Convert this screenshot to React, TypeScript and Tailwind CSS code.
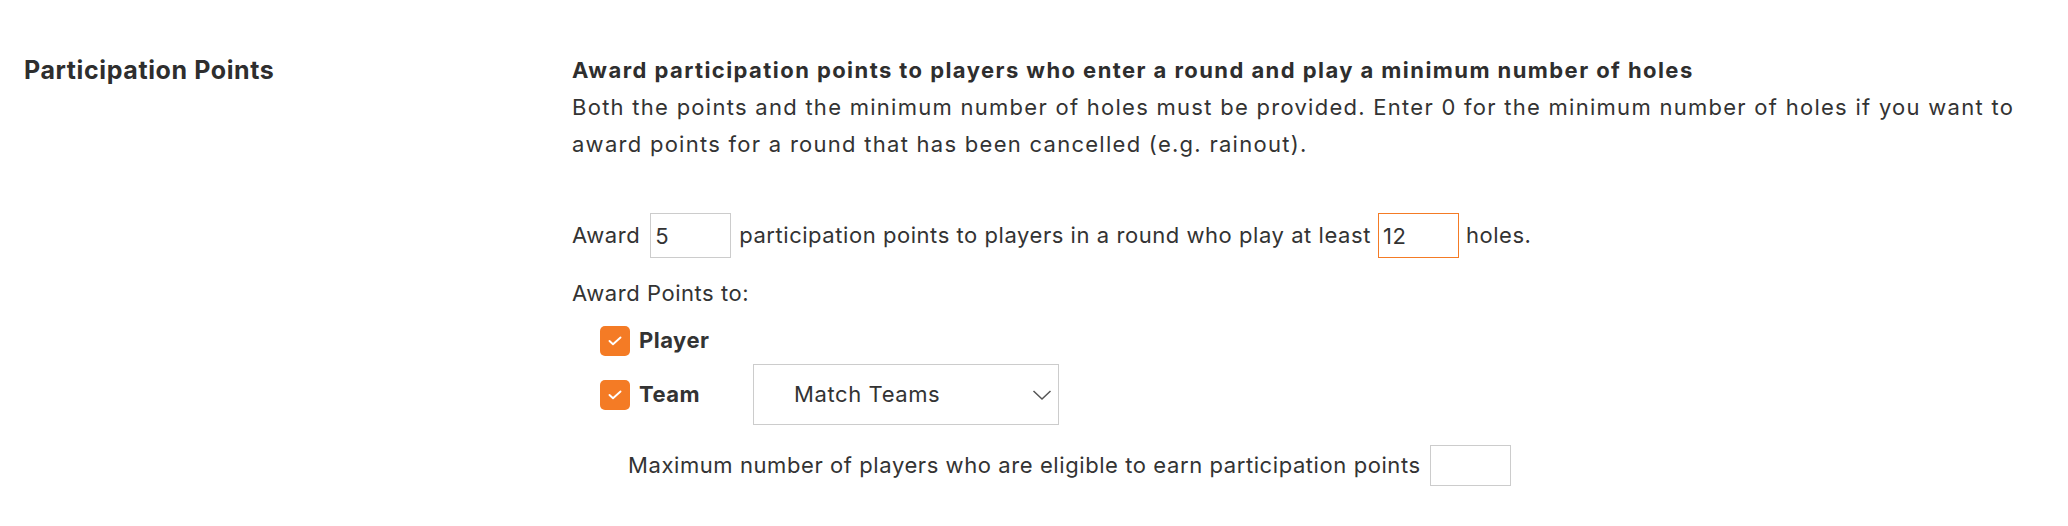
import React from "react";

function Check({ label }: { label: string }) {
  return (
    <div className="flex items-center">
      <span className="flex h-[30px] w-[30px] items-center justify-center rounded-[5px] bg-[#f47b25]">
        <svg width="16" height="12" viewBox="0 0 16 12" fill="none">
          <path d="M2.5 6L6 9.2L13.5 2.5" stroke="white" strokeWidth="1.9" strokeLinecap="round" strokeLinejoin="round" />
        </svg>
      </span>
      <span className="ml-[9px] font-bold tracking-[0.5px]">{label}</span>
    </div>
  );
}

export default function App() {
  return (
    <div
      className="min-h-[526px] w-full bg-white text-[22px] leading-[37px] text-[#333333]"
      style={{ fontFamily: "Inter, 'Open Sans', sans-serif" }}
    >
      <div className="flex pl-[24px] pt-[52px]">
        <div className="w-[548px] shrink-0 text-[25px] font-bold tracking-[0.6px] text-[#2e2e2e]">
          Participation Points
        </div>
        <div className="flex flex-col">
          <div className="font-bold tracking-[1.43px] text-[#2e2e2e]">
            Award participation points to players who enter a round and play a minimum number of holes
          </div>
          <div className="w-[1470px] tracking-[1.27px]">
            Both the points and the minimum number of holes must be provided. Enter 0 for the minimum number of holes if
            you want to award points for a round that has been cancelled (e.g. rainout).
          </div>
          <div className="mt-[50px] flex items-center tracking-[0.55px]">
            <span>Award</span>
            <input
              defaultValue="5"
              className="ml-[10px] mr-[8px] h-[45px] w-[81px] border border-[#cccccc] px-[4px] text-[22px] text-[#333333] outline-none"
            />
            <span>participation points to players in a round who play at least</span>
            <input
              defaultValue="12"
              className="mx-[7px] h-[45px] w-[81px] border border-[#f47b25] px-[4px] text-[22px] text-[#333333] outline-none"
            />
            <span>holes.</span>
          </div>
          <div className="mt-[17px] tracking-[0.55px]">Award Points to:</div>
          <div className="ml-[28px] mt-[10px] flex flex-col">
            <Check label="Player" />
            <div className="mt-[5px] flex items-center">
              <div className="w-[153px]">
                <Check label="Team" />
              </div>
              <div className="flex h-[61px] w-[306px] items-center justify-between border border-[#cccccc] pl-[40px] pr-[6px]">
                <span className="tracking-[0.6px]">Match Teams</span>
                <svg width="20" height="12" viewBox="0 0 20 12" fill="none">
                  <path d="M1.5 2L10 10L18.5 2" stroke="#555555" strokeWidth="1.5" />
                </svg>
              </div>
            </div>
          </div>
          <div className="ml-[56px] mt-[20px] flex items-center tracking-[0.58px]">
            <span>Maximum number of players who are eligible to earn participation points</span>
            <input className="ml-[9px] h-[41px] w-[81px] border border-[#cccccc] outline-none" />
          </div>
        </div>
      </div>
    </div>
  );
}
